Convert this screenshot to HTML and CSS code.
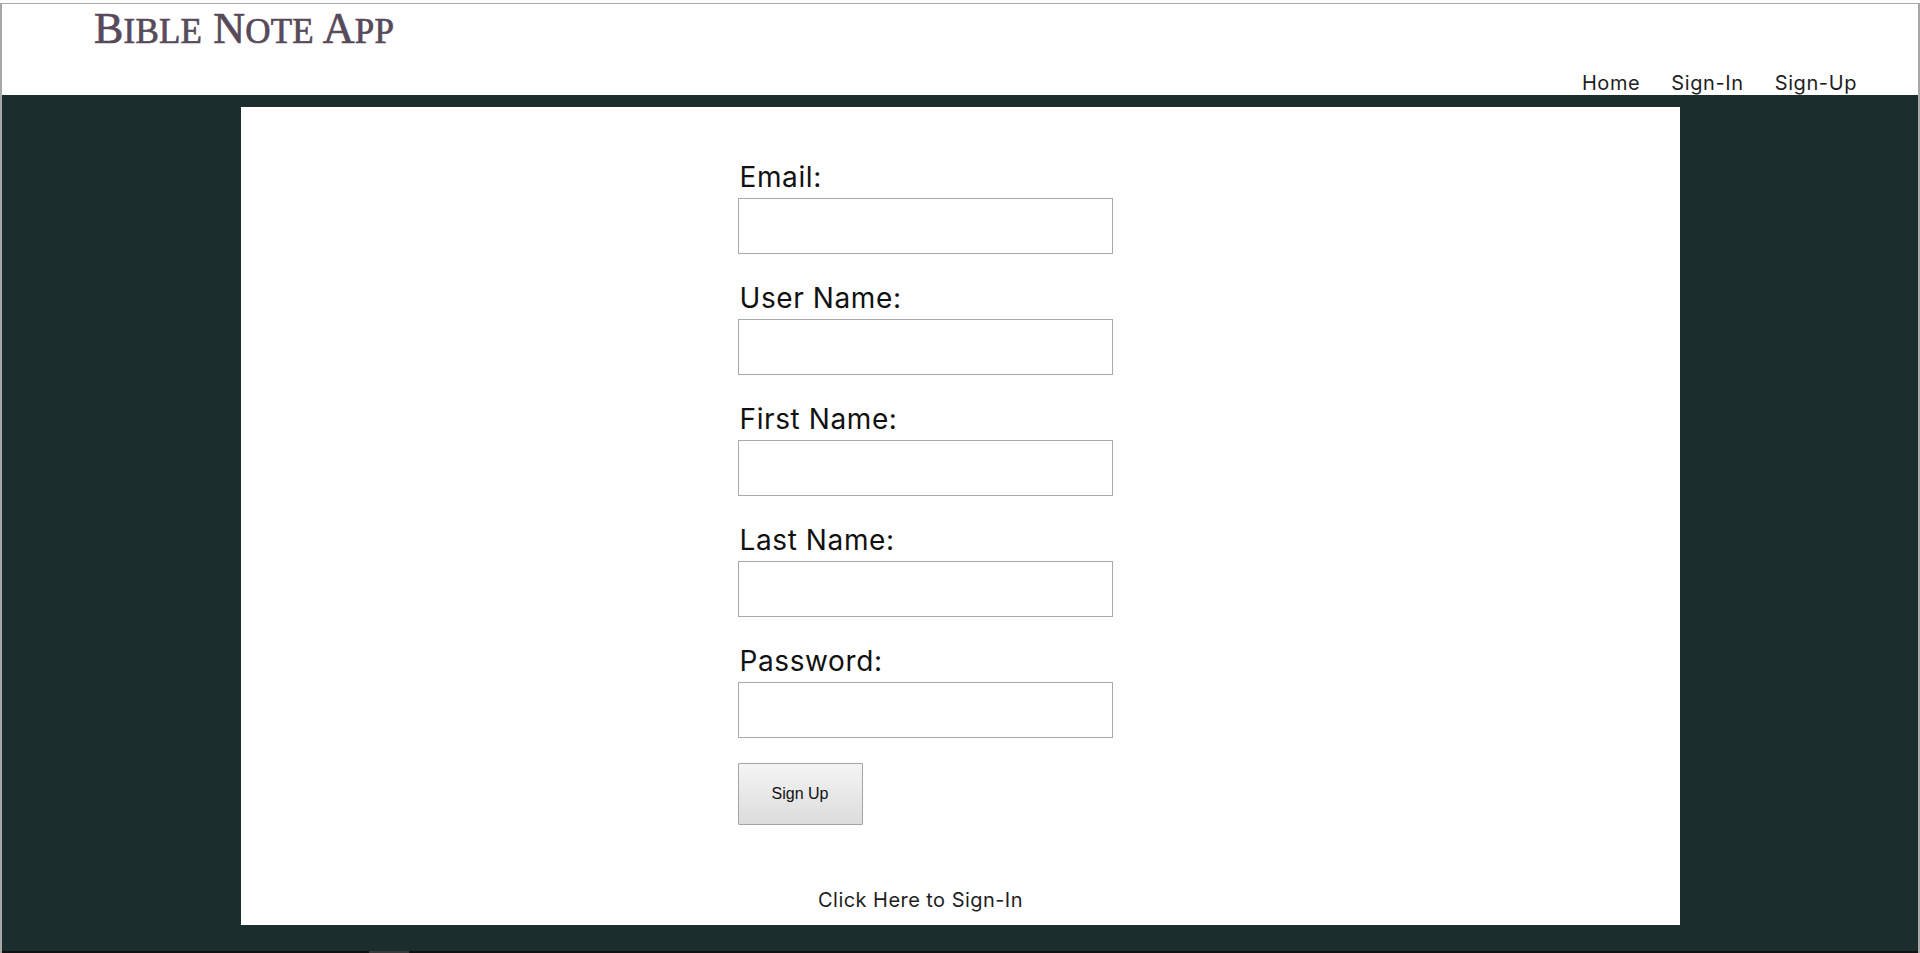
FILE: index.html
```html
<!DOCTYPE html>
<html lang="en">
<head>
<meta charset="utf-8">
<title>Bible Note App - Sign Up</title>
<link rel="stylesheet" href="styles.css">
</head>
<body>
<div class="frame">
  <header class="site-header">
    <h1 class="brand"><span class="cap">B</span><span class="sc">ible</span> <span class="cap">N</span><span class="sc">ote</span> <span class="cap">A</span><span class="sc">pp</span></h1>
    <nav class="nav">
      <a href="#" class="nav-link">Home</a>
      <a href="#" class="nav-link">Sign-In</a>
      <a href="#" class="nav-link">Sign-Up</a>
    </nav>
  </header>
  <main class="main">
    <section class="card">
      <form class="signup-form">
        <div class="field">
          <label class="field-label" for="email">Email:</label>
          <input class="field-input" id="email" type="email">
        </div>
        <div class="field">
          <label class="field-label" for="username">User Name:</label>
          <input class="field-input" id="username" type="text">
        </div>
        <div class="field">
          <label class="field-label" for="first">First Name:</label>
          <input class="field-input" id="first" type="text">
        </div>
        <div class="field">
          <label class="field-label" for="last">Last Name:</label>
          <input class="field-input" id="last" type="text">
        </div>
        <div class="field field-last">
          <label class="field-label" for="password">Password:</label>
          <input class="field-input" id="password" type="password">
        </div>
        <button class="submit-btn" type="button">Sign Up</button>
        <div class="signin-row"><a href="#" class="signin-link">Click Here to Sign-In</a></div>
      </form>
    </section>
  </main>
  <div class="bottom-bar"><span class="bottom-thumb"></span></div>
</div>
</body>
</html>
```

FILE: styles.css
```css
html, body {
  margin: 0;
  padding: 0;
  background: #ffffff;
}

body {
  padding-top: 3px;
  height: 953px;
  box-sizing: border-box;
  overflow: hidden;
  font-family: "Inter", "Liberation Sans", sans-serif;
}

.frame {
  border-top: 1px solid #a8a8a8;
  border-left: 2px solid #a8a8a8;
  border-right: 2px solid #a8a8a8;
  display: flex;
  flex-direction: column;
  height: 950px;
  box-sizing: border-box;
}

.site-header {
  height: 91px;
  display: flex;
  justify-content: space-between;
  background: #ffffff;
  flex-shrink: 0;
}

.brand {
  margin: 0;
  padding-left: 92px;
  font-family: "Liberation Serif", "Times New Roman", serif;
  font-weight: normal;
  font-size: 44px;
  line-height: 50px;
  color: #574a5a;
  -webkit-text-stroke: 0.7px #574a5a;
  letter-spacing: 0.2px;
  align-self: flex-start;
}

.brand .sc {
  text-transform: uppercase;
  font-size: 35px;
}

.nav {
  align-self: flex-end;
  display: flex;
  gap: 31px;
  padding-right: 61px;
}

.nav-link {
  font-size: 20px;
  line-height: 24px;
  color: #1e1e1e;
  text-decoration: none;
  letter-spacing: 0.6px;
}

.main {
  flex: 1;
  background: #1b2d2d;
  padding: 12px 0 26px;
  display: flex;
  justify-content: center;
}

.card {
  width: 1439px;
  background: #ffffff;
  padding: 53px 0 0 497px;
  box-sizing: border-box;
}

.signup-form {
  width: 375px;
  display: flex;
  flex-direction: column;
}

.field {
  display: flex;
  flex-direction: column;
  margin-bottom: 27px;
}

.field-last {
  margin-bottom: 25px;
}

.field-label {
  font-size: 28px;
  line-height: 34px;
  color: #111111;
  margin-bottom: 4px;
  padding-left: 2px;
  letter-spacing: 0.6px;
}

.field-input {
  width: 375px;
  height: 56px;
  box-sizing: border-box;
  border: 1px solid #a9a9a9;
  border-radius: 0;
  background: #ffffff;
  margin: 0;
  padding: 0 8px;
  font-size: 18px;
}

.submit-btn {
  width: 125px;
  height: 62px;
  box-sizing: border-box;
  border: 1px solid #a4a4a4;
  border-radius: 1px;
  background: linear-gradient(to bottom, #f4f4f4, #dcdcdc);
  font-family: "Liberation Sans", Arial, sans-serif;
  font-size: 16px;
  color: #111111;
  padding: 0;
  margin: 0;
}

.signin-row {
  width: 366px;
  margin-top: 63px;
  text-align: center;
}

.signin-link {
  font-size: 20px;
  line-height: 24px;
  color: #1e1e1e;
  text-decoration: none;
  letter-spacing: 0.45px;
}

.bottom-bar {
  height: 2px;
  background: #111111;
  flex-shrink: 0;
  display: flex;
}

.bottom-thumb {
  width: 40px;
  height: 2px;
  margin-left: 367px;
  background: #3a3a3a;
}
```
